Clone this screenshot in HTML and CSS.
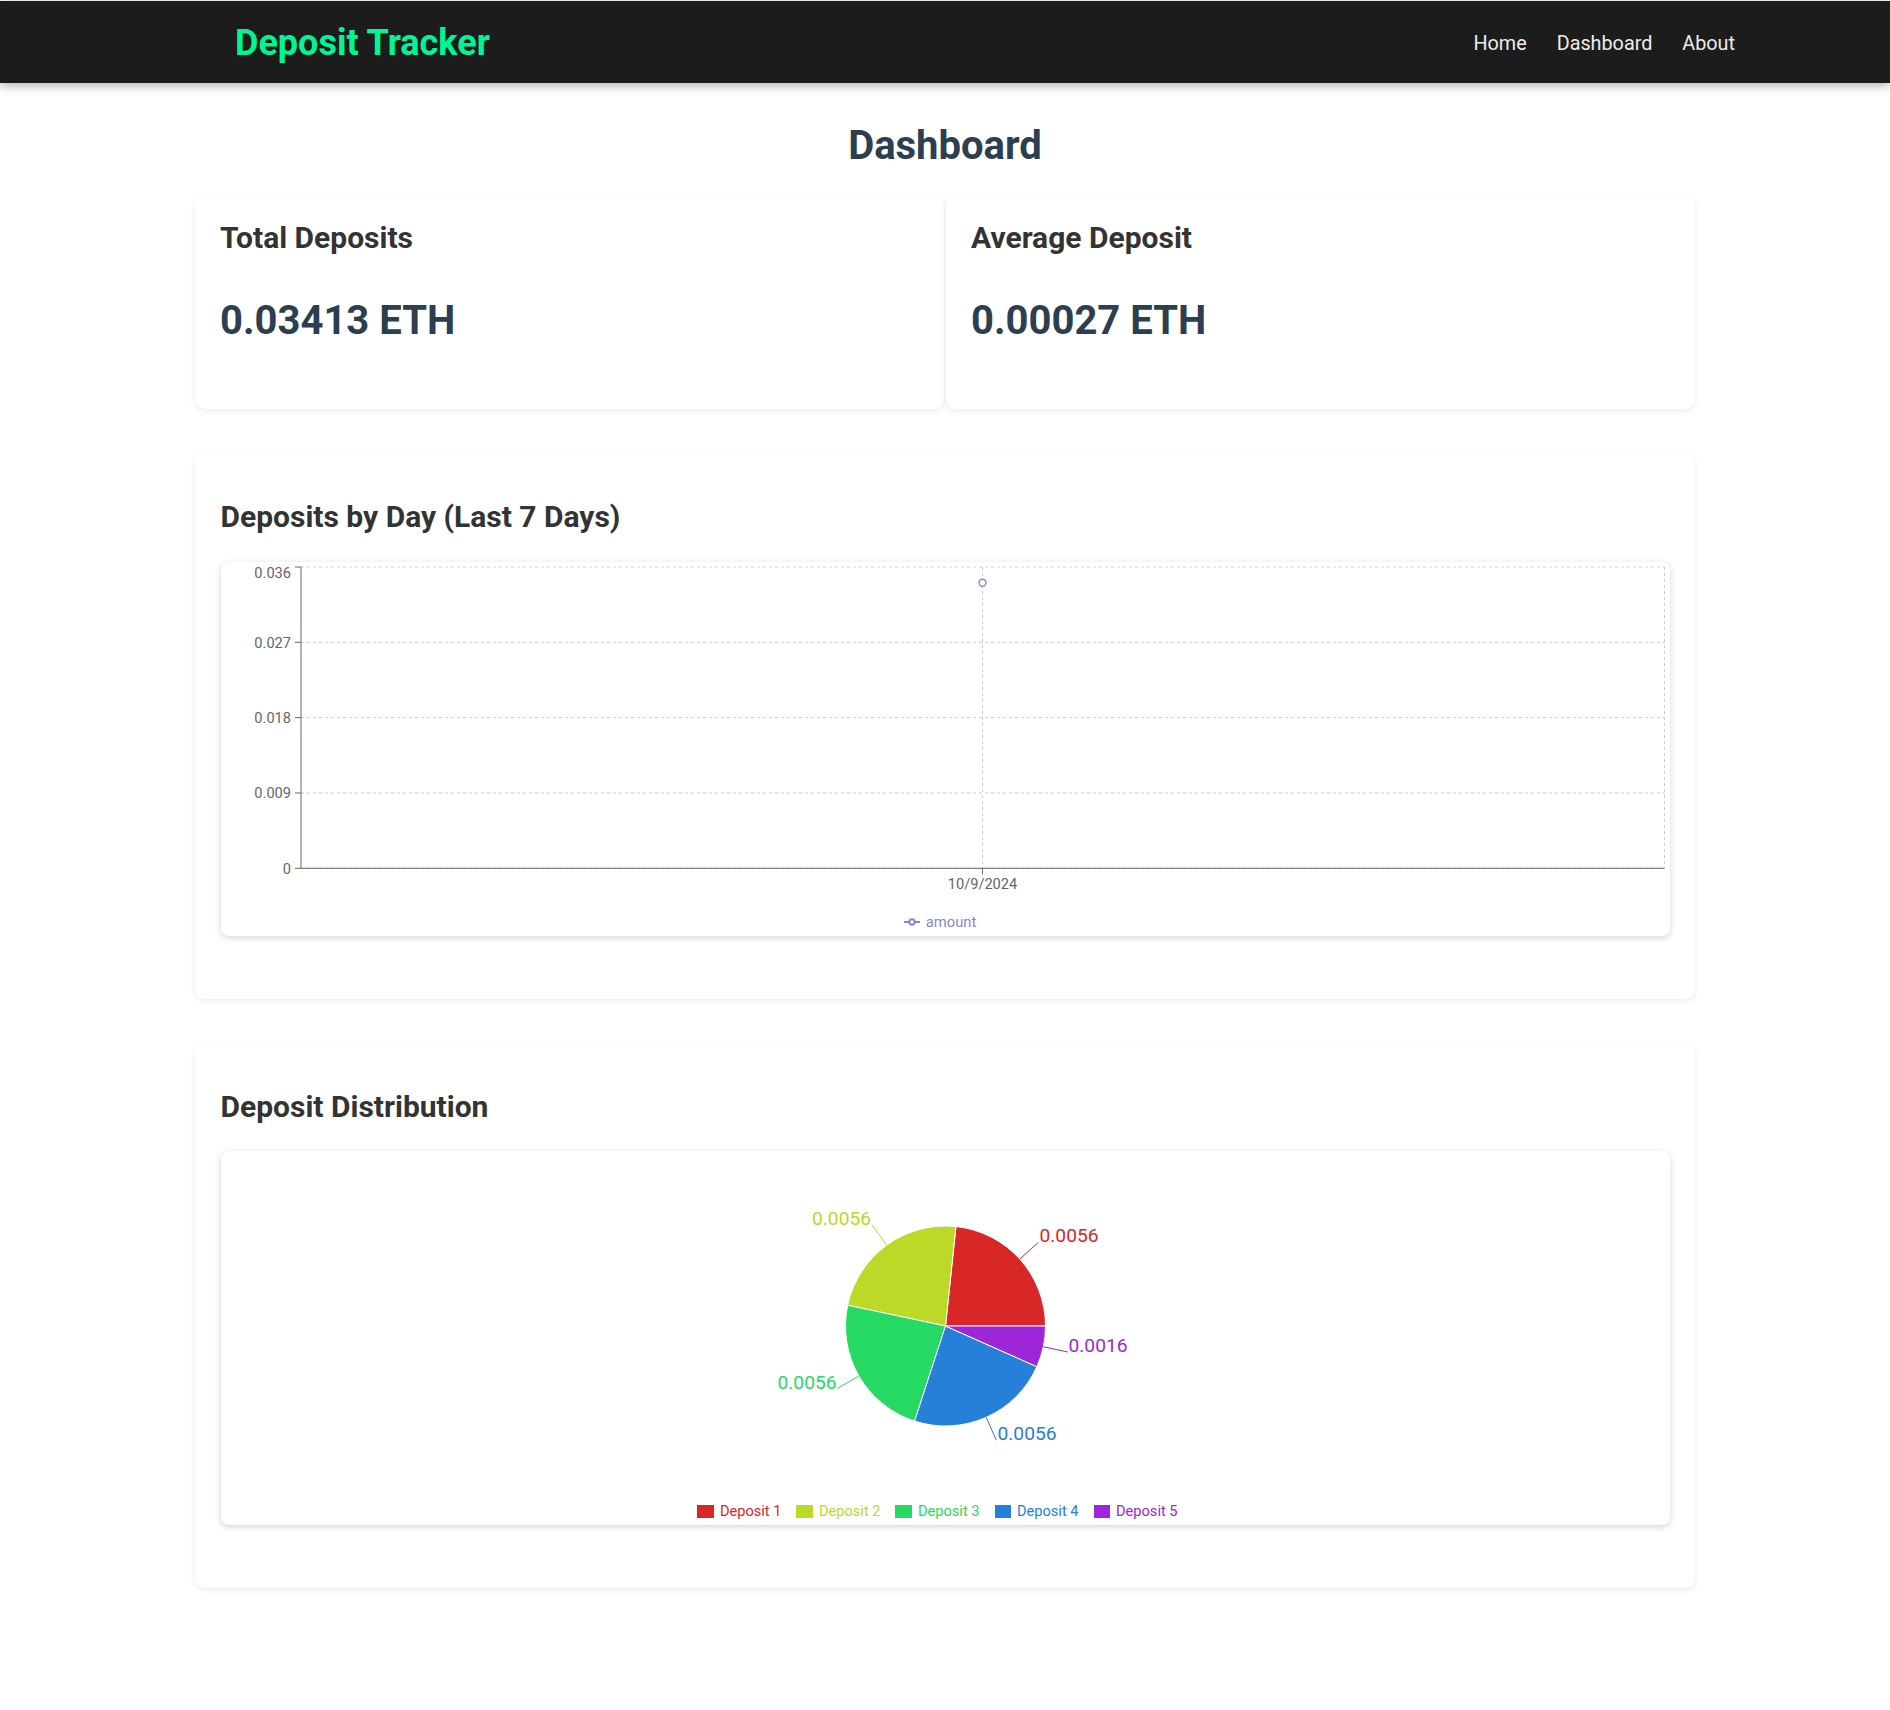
FILE: index.html
```html
<!DOCTYPE html>
<html lang="en">
<head>
<meta charset="utf-8">
<title>Deposit Tracker</title>
<link rel="stylesheet" href="styles.css">
</head>
<body>
<nav class="navbar">
  <div class="logo">Deposit Tracker</div>
  <ul class="nav-links">
    <li><a href="#">Home</a></li>
    <li><a href="#">Dashboard</a></li>
    <li><a href="#">About</a></li>
  </ul>
</nav>

<main class="main">
  <h1 class="page-title">Dashboard</h1>

  <div class="stats">
    <div class="card stat-card">
      <h3 class="card-title">Total Deposits</h3>
      <p class="stat-value">0.03413 ETH</p>
    </div>
    <div class="card stat-card">
      <h3 class="card-title">Average Deposit</h3>
      <p class="stat-value">0.00027 ETH</p>
    </div>
  </div>

  <section class="card chart-section">
    <h3 class="card-title">Deposits by Day (Last 7 Days)</h3>
    <div class="chart-box">
      <svg class="chart-svg" width="1449" height="337" viewBox="0 0 1449 337">
        <g class="grid" stroke="#ccc" stroke-dasharray="3 3" fill="none">
          <line x1="80" y1="5" x2="1443.5" y2="5"/>
          <line x1="80" y1="80.3" x2="1443.5" y2="80.3"/>
          <line x1="80" y1="155.6" x2="1443.5" y2="155.6"/>
          <line x1="80" y1="231" x2="1443.5" y2="231"/>
          <line x1="80" y1="306.3" x2="1443.5" y2="306.3"/>
          <line x1="761.5" y1="5" x2="761.5" y2="306.3"/>
          <line x1="1443.5" y1="5" x2="1443.5" y2="306.3"/>
        </g>
        <g stroke="#666" fill="none">
          <line x1="80" y1="5" x2="80" y2="306.3"/>
          <line x1="74" y1="5" x2="80" y2="5"/>
          <line x1="74" y1="80.3" x2="80" y2="80.3"/>
          <line x1="74" y1="155.6" x2="80" y2="155.6"/>
          <line x1="74" y1="231" x2="80" y2="231"/>
          <line x1="74" y1="306.3" x2="80" y2="306.3"/>
          <line x1="80" y1="306.3" x2="1443.5" y2="306.3"/>
          <line x1="761.5" y1="306.3" x2="761.5" y2="312.3"/>
        </g>
        <g class="axis-text" fill="#666" text-anchor="end">
          <text x="70" y="16">0.036</text>
          <text x="70" y="85.5">0.027</text>
          <text x="70" y="160.8">0.018</text>
          <text x="70" y="236.2">0.009</text>
          <text x="70" y="311.5">0</text>
        </g>
        <text class="axis-text" x="761.5" y="327" fill="#666" text-anchor="middle">10/9/2024</text>
        <circle cx="761.5" cy="20.7" r="3.5" fill="#fff" stroke="#8884d8" stroke-width="1.4"/>
      </svg>
      <ul class="legend">
        <li class="legend-item line-item">
          <svg width="16" height="16" viewBox="0 0 32 32"><path d="M0,16h10.667A5.333,5.333,0,1,1,21.333,16H32M21.333,16A5.333,5.333,0,1,1,10.667,16" fill="none" stroke="#8884d8" stroke-width="4"/></svg>
          <span>amount</span>
        </li>
      </ul>
    </div>
  </section>

  <section class="card chart-section">
    <h3 class="card-title">Deposit Distribution</h3>
    <div class="chart-box">
      <svg class="chart-svg" width="1449" height="337" viewBox="0 0 1449 337">
        <g stroke="#fff" stroke-width="1">
          <path fill="#d92626" d="M724.5,175 L824.5,175 A100,100 0 0 0 734.953,75.548 Z"/>
          <path fill="#bbd926" d="M724.5,175 L734.953,75.548 A100,100 0 0 0 626.685,154.209 Z"/>
          <path fill="#26d962" d="M724.5,175 L626.685,154.209 A100,100 0 0 0 693.598,270.106 Z"/>
          <path fill="#2680d9" d="M724.5,175 L693.598,270.106 A100,100 0 0 0 815.855,215.674 Z"/>
          <path fill="#9d26d9" d="M724.5,175 L815.855,215.674 A100,100 0 0 0 824.5,175 Z"/>
        </g>
        <g fill="none" stroke-width="1">
          <line x1="798.81" y1="108.09" x2="817.39" y2="91.36" stroke="#d92626"/>
          <line x1="665.72" y1="94.10" x2="651.03" y2="73.88" stroke="#bbd926"/>
          <line x1="637.90" y1="225" x2="616.25" y2="237.5" stroke="#26d962"/>
          <line x1="765.17" y1="266.35" x2="775.34" y2="289.19" stroke="#2680d9"/>
          <line x1="822.31" y1="195.79" x2="846.77" y2="200.99" stroke="#9d26d9"/>
        </g>
        <g class="pie-label">
          <text x="818.5" y="91.4" fill="#d92626" text-anchor="start">0.0056</text>
          <text x="650" y="73.9" fill="#bbd926" text-anchor="end">0.0056</text>
          <text x="615.5" y="237.5" fill="#26d962" text-anchor="end">0.0056</text>
          <text x="776.5" y="289.2" fill="#2680d9" text-anchor="start">0.0056</text>
          <text x="847.5" y="201" fill="#9d26d9" text-anchor="start">0.0016</text>
        </g>
      </svg>
      <ul class="legend">
        <li class="legend-item"><span class="swatch swatch-1"></span><span class="txt-1">Deposit 1</span></li>
        <li class="legend-item"><span class="swatch swatch-2"></span><span class="txt-2">Deposit 2</span></li>
        <li class="legend-item"><span class="swatch swatch-3"></span><span class="txt-3">Deposit 3</span></li>
        <li class="legend-item"><span class="swatch swatch-4"></span><span class="txt-4">Deposit 4</span></li>
        <li class="legend-item"><span class="swatch swatch-5"></span><span class="txt-5">Deposit 5</span></li>
      </ul>
    </div>
  </section>
</main>
</body>
</html>
```

FILE: styles.css
```css
* {
  box-sizing: border-box;
}

body {
  margin: 0;
  padding-top: 1px;
  font-family: Roboto, "Liberation Sans", sans-serif;
  background: #fff;
  color: #333;
}

.navbar {
  height: 82px;
  background: #1c1c1c;
  display: flex;
  align-items: center;
  justify-content: space-between;
  padding: 0 155px 0 235px;
  box-shadow: 0 2px 10px rgba(0, 0, 0, 0.35);
}

.logo {
  font-size: 36px;
  line-height: 1;
  padding-top: 2px;
  font-weight: 700;
  color: #00f596;
}

.nav-links {
  display: flex;
  gap: 30px;
  list-style: none;
  margin: 0;
  padding: 2px 0 0;
}

.nav-links a {
  color: #ececec;
  text-decoration: none;
  font-size: 19.8px;
  font-weight: 400;
}

.main {
  width: 1500px;
  margin: 0 auto;
  padding: 39px 0 120px;
}

.page-title {
  font-size: 40px;
  line-height: 47px;
  font-weight: 700;
  color: #2c3e50;
  text-align: center;
  margin: 0 0 26px;
}

.stats {
  display: grid;
  grid-template-columns: 1fr 1fr;
  gap: 2px;
}

.card {
  background: #fff;
  border-radius: 10px;
  box-shadow: 0 2px 6px rgba(0, 0, 0, 0.08);
}

.stat-card {
  height: 214px;
  padding: 25px 25px 0;
}

.card-title {
  font-size: 30px;
  line-height: 35px;
  font-weight: 700;
  color: #333;
  margin: 0;
}

.stat-value {
  font-size: 40px;
  line-height: 47px;
  font-weight: 700;
  color: #2c3e50;
  margin: 41.5px 0 0;
}

.chart-section {
  margin-top: 44px;
  padding: 46px 25.5px 63px;
}

.chart-box {
  margin-top: 27.5px;
  height: 374px;
  border-radius: 8px;
  background: #fff;
  box-shadow: 0 2px 7px rgba(0, 0, 0, 0.17);
  overflow: hidden;
}

.chart-svg {
  display: block;
}

.axis-text {
  font-family: Roboto, "Liberation Sans", sans-serif;
  font-size: 14.6px;
}

.pie-label {
  font-family: Roboto, "Liberation Sans", sans-serif;
  font-size: 19.2px;
}

.legend {
  list-style: none;
  margin: 13px 0 0;
  padding: 0;
  height: 20px;
  display: flex;
  justify-content: center;
  font-size: 14.6px;
  line-height: 20px;
}

.legend-item {
  display: flex;
  align-items: center;
  gap: 6px;
  margin-right: 15px;
}

.line-item {
  color: #8884d8;
  font-size: 14.8px;
  margin-right: 10px;
}

.line-item svg {
  display: block;
}

.swatch {
  display: inline-block;
  width: 16.5px;
  height: 12.5px;
  margin-top: 1px;
}

.swatch-1 { background: #d92626; }
.swatch-2 { background: #bbd926; }
.swatch-3 { background: #26d962; }
.swatch-4 { background: #2680d9; }
.swatch-5 { background: #9d26d9; }

.txt-1 { color: #d92626; }
.txt-2 { color: #bbd926; }
.txt-3 { color: #26d962; }
.txt-4 { color: #2680d9; }
.txt-5 { color: #9d26d9; }
```
